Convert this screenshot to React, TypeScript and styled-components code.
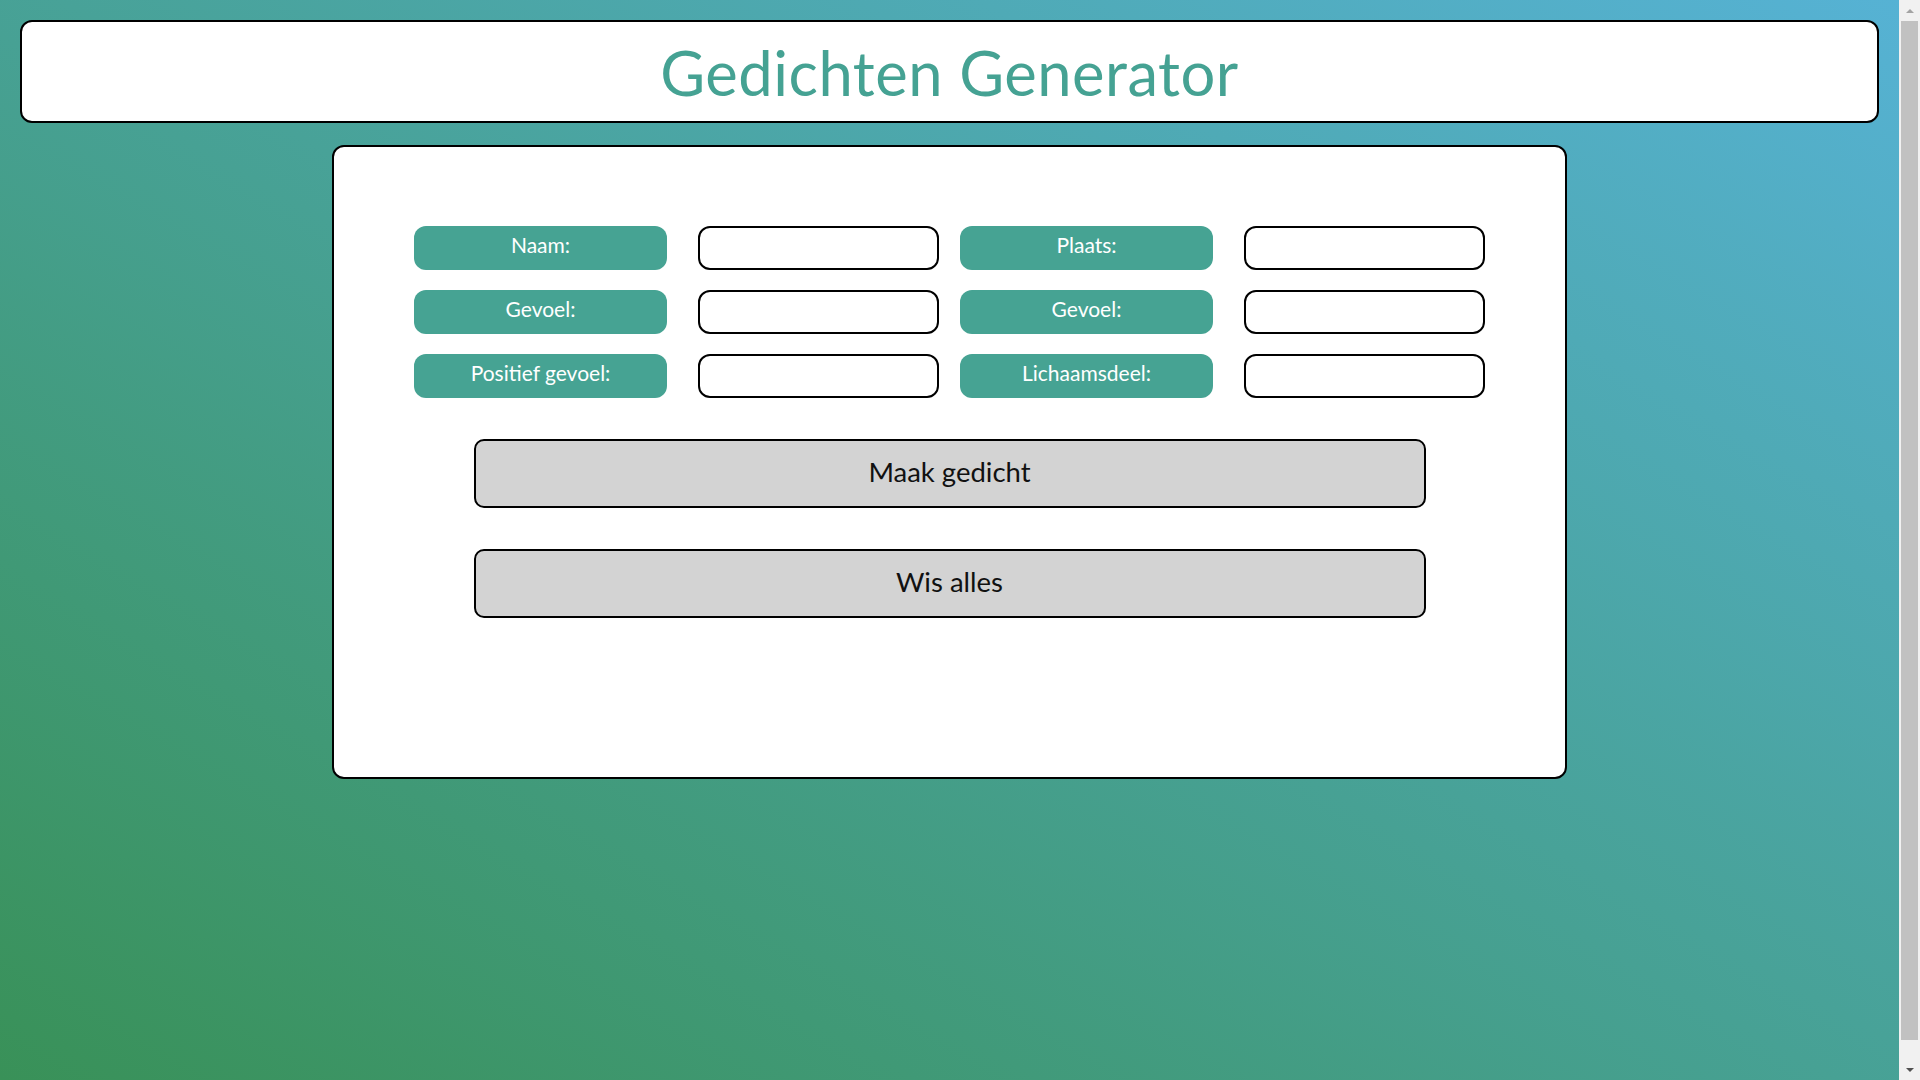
import React from "react";
import styled, { createGlobalStyle } from "styled-components";

const GlobalStyle = createGlobalStyle`
  html, body {
    margin: 0;
    background: #f1f1f1;
  }
  body {
    font-family: "Lato", "Open Sans", sans-serif;
  }
`;

const Page = styled.div`
  height: 100vh;
  display: flex;
  overflow: hidden;
`;

const Viewport = styled.div`
  flex: 1;
  min-width: 0;
  background: linear-gradient(to top right, #399158, #56b2d4);
  padding: 20px 0;
  display: flex;
  flex-direction: column;
  align-items: center;
`;

const ScrollTrack = styled.aside`
  width: 21px;
  flex: none;
  background: #f1f1f1;
  display: flex;
  flex-direction: column;
  align-items: center;
`;

const ScrollArrow = styled.div<{ $down?: boolean; $dim?: boolean }>`
  height: 21px;
  width: 100%;
  display: flex;
  align-items: center;
  justify-content: center;
  &::before {
    content: "";
    width: 0;
    height: 0;
    border-left: 4px solid transparent;
    border-right: 4px solid transparent;
    ${(p) =>
      p.$down
        ? `border-top: 4px solid ${p.$dim ? "#a3a3a3" : "#505050"};`
        : `border-bottom: 4px solid ${p.$dim ? "#a3a3a3" : "#505050"};`}
  }
`;

const ScrollThumb = styled.div`
  width: 17px;
  height: 1019px;
  background: #c1c1c1;
`;

const ScrollSpacer = styled.div`
  flex: 1;
`;

const Header = styled.header`
  box-sizing: border-box;
  align-self: stretch;
  margin: 0 20px;
  height: 103px;
  background: #ffffff;
  border: 2px solid #000;
  border-radius: 12px;
  display: flex;
  align-items: center;
  justify-content: center;
`;

const Title = styled.h1`
  margin: 0;
  font-family: "Lato", sans-serif;
  font-weight: 400;
  font-size: 61.5px;
  letter-spacing: 0.5px;
  color: #45a293;
`;

const Card = styled.main`
  box-sizing: border-box;
  margin-top: 22px;
  width: 1235px;
  height: 634px;
  background: #ffffff;
  border: 2px solid #000;
  border-radius: 12px;
  padding: 79px 0 0;
  display: flex;
  flex-direction: column;
  align-items: center;
`;

const Fields = styled.div`
  display: flex;
  flex-direction: column;
  gap: 20px;
`;

const FieldRow = styled.div`
  display: flex;
  gap: 21px;
`;

const FieldPair = styled.div`
  display: flex;
  gap: 31px;
`;

const FieldLabel = styled.label`
  box-sizing: border-box;
  width: 253px;
  height: 44px;
  background: #46a393;
  color: #ffffff;
  border-radius: 12px;
  display: flex;
  align-items: center;
  justify-content: center;
  font-family: "Lato", sans-serif;
  font-size: 21px;
  padding-bottom: 7px;
`;

const FieldInput = styled.input`
  box-sizing: border-box;
  height: 44px;
  width: 241px;
  margin: 0;
  background: #ffffff;
  border: 2px solid #000;
  border-radius: 12px;
  font-family: "Lato", sans-serif;
  font-size: 18px;
  padding: 0 12px;
  outline: none;
`;

const Actions = styled.div`
  margin-top: 41px;
  display: flex;
  flex-direction: column;
  gap: 41px;
`;

const ActionButton = styled.button`
  box-sizing: border-box;
  width: 952px;
  height: 69px;
  background: #d3d3d3;
  border: 2px solid #000;
  border-radius: 10px;
  font-family: "Lato", sans-serif;
  font-size: 27.5px;
  color: #111;
  cursor: pointer;
  padding: 0 0 4px;
`;

const fields: [string, string][] = [
  ["Naam:", "Plaats:"],
  ["Gevoel:", "Gevoel:"],
  ["Positief gevoel:", "Lichaamsdeel:"],
];

export default function App() {
  return (
    <>
      <GlobalStyle />
      <Page>
        <Viewport>
          <Header>
            <Title>Gedichten Generator</Title>
          </Header>
          <Card>
            <Fields>
              {fields.map(([a, b], i) => (
                <FieldRow key={i}>
                  <FieldPair>
                    <FieldLabel>{a}</FieldLabel>
                    <FieldInput type="text" />
                  </FieldPair>
                  <FieldPair>
                    <FieldLabel>{b}</FieldLabel>
                    <FieldInput type="text" />
                  </FieldPair>
                </FieldRow>
              ))}
            </Fields>
            <Actions>
              <ActionButton>Maak gedicht</ActionButton>
              <ActionButton>Wis alles</ActionButton>
            </Actions>
          </Card>
        </Viewport>
        <ScrollTrack aria-hidden="true">
          <ScrollArrow $dim />
          <ScrollThumb />
          <ScrollSpacer />
          <ScrollArrow $down />
        </ScrollTrack>
      </Page>
    </>
  );
}
